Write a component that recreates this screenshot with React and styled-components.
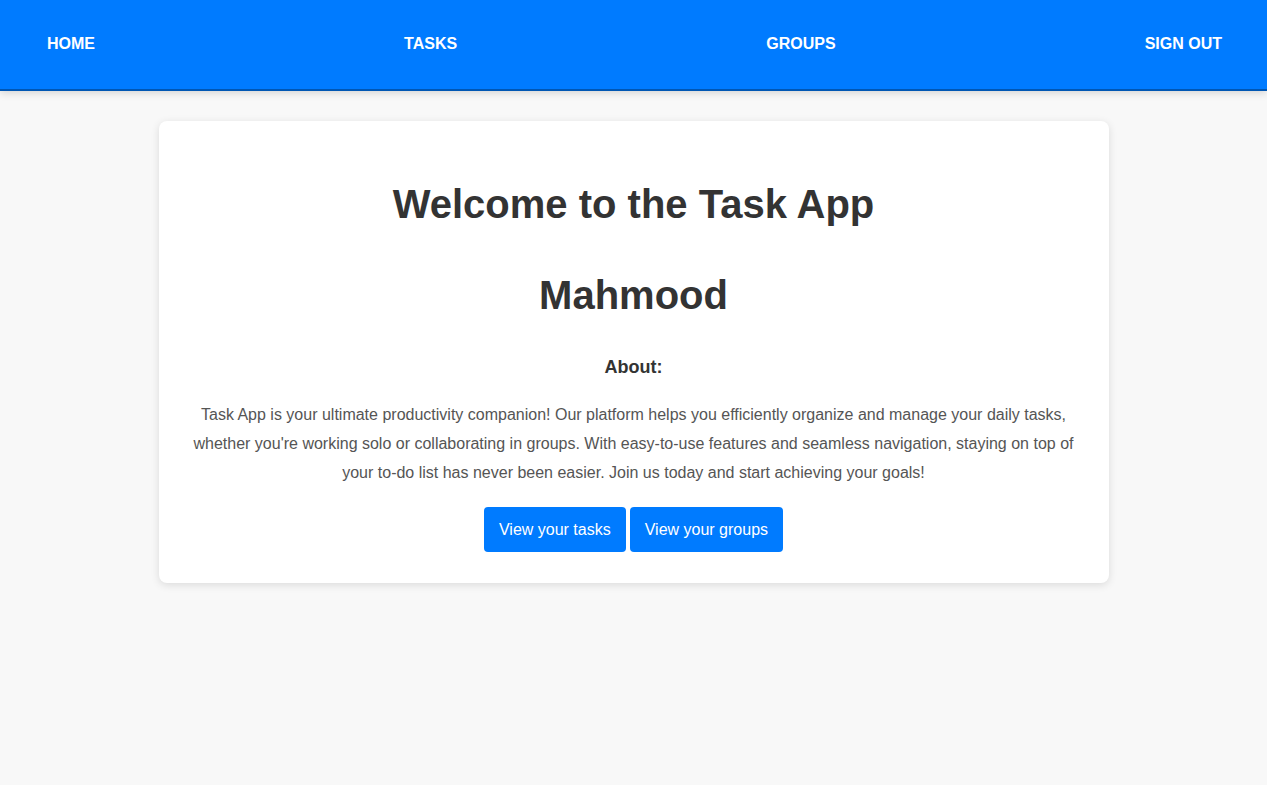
import React from "react";
import styled, { createGlobalStyle } from "styled-components";

const GlobalStyle = createGlobalStyle`
  html, body { margin: 0; padding: 0; }
  body {
    background: #f8f8f8;
    font-family: "Liberation Sans", Arial, sans-serif;
    min-height: 785px;
  }
`;

const NavBar = styled.nav`
  height: 89px;
  background: #007bff;
  border-bottom: 2px solid #0056b3;
  box-shadow: 0 2px 8px rgba(0, 0, 0, 0.15);
  display: flex;
  align-items: center;
  justify-content: space-between;
  padding: 0 45px 0 47px;
  box-sizing: content-box;
`;

const NavLink = styled.a`
  color: #fff;
  font-weight: bold;
  font-size: 16px;
  text-transform: uppercase;
  text-decoration: none;
  line-height: 18px;
  margin-bottom: 2px;
`;

const Main = styled.main`
  display: flex;
  justify-content: center;
  padding-top: 30px;
`;

const Card = styled.section`
  width: 950px;
  box-sizing: border-box;
  background: #fff;
  border-radius: 8px;
  box-shadow: 0 2px 8px rgba(0, 0, 0, 0.12);
  padding: 32px 32px 31px;
  text-align: center;
  display: flex;
  flex-direction: column;
  align-items: center;
`;

const Title = styled.h1`
  margin: ${(p) => p.$mt}px 0 0;
  font-size: 40px;
  line-height: 46px;
  font-weight: bold;
  color: #333;
`;

const SubTitle = styled.h3`
  margin: 39px 0 0;
  font-size: 18px;
  line-height: 21px;
  font-weight: bold;
  color: #333;
`;

const Paragraph = styled.p`
  margin: 22px 0 0;
  font-size: 16px;
  line-height: 29px;
  color: #555;
`;

const ButtonRow = styled.div`
  display: flex;
  gap: 4px;
  margin-top: 20px;
`;

const Button = styled.button`
  height: 45px;
  padding: 0 15px;
  border: none;
  border-radius: 4px;
  background: #007bff;
  color: #fff;
  font-family: "Liberation Sans", Arial, sans-serif;
  font-size: 16px;
  cursor: pointer;
`;

export default function App() {
  return (
    <>
      <GlobalStyle />
      <NavBar>
        <NavLink href="#">Home</NavLink>
        <NavLink href="#">Tasks</NavLink>
        <NavLink href="#">Groups</NavLink>
        <NavLink href="#">Sign Out</NavLink>
      </NavBar>
      <Main>
        <Card>
          <Title $mt={28}>Welcome to the Task App</Title>
          <Title $mt={45}>Mahmood</Title>
          <SubTitle>About:</SubTitle>
          <Paragraph>
            Task App is your ultimate productivity companion! Our platform helps you efficiently organize and manage your daily tasks, whether you're working solo or collaborating in groups. With easy-to-use features and seamless navigation, staying on top of your to-do list has never been easier. Join us today and start achieving your goals!
          </Paragraph>
          <ButtonRow>
            <Button>View your tasks</Button>
            <Button>View your groups</Button>
          </ButtonRow>
        </Card>
      </Main>
    </>
  );
}
